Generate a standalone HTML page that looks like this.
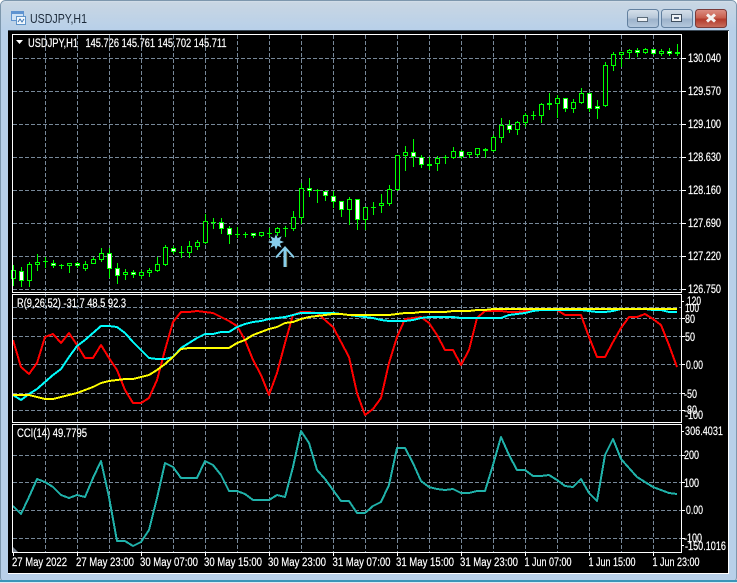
<!DOCTYPE html>
<html>
<head>
<meta charset="utf-8">
<style>
html,body{margin:0;padding:0;background:#fff}
#w{position:relative;width:737px;height:583px;overflow:hidden}
svg{display:block}
text{font-family:"Liberation Sans",sans-serif;font-size:11.5px;fill:#fff;stroke:#fff;stroke-width:.2px}
</style>
</head>
<body>
<div id="w">
<svg width="737" height="583" viewBox="0 0 737 583" xmlns="http://www.w3.org/2000/svg">
<defs>
<linearGradient id="tb" x1="0" y1="0" x2="0" y2="1"><stop offset="0" stop-color="#d3dee8"/><stop offset="0.06" stop-color="#c8d6e3"/><stop offset="1" stop-color="#b8d0e9"/></linearGradient>
<linearGradient id="btn" x1="0" y1="0" x2="0" y2="1"><stop offset="0" stop-color="#d6e0ea"/><stop offset="0.45" stop-color="#b9c9da"/><stop offset="0.55" stop-color="#9db3cb"/><stop offset="1" stop-color="#b5c9de"/></linearGradient>
<linearGradient id="cls" x1="0" y1="0" x2="0" y2="1"><stop offset="0" stop-color="#dc8f84"/><stop offset="0.45" stop-color="#c9604f"/><stop offset="0.55" stop-color="#b23a2b"/><stop offset="1" stop-color="#c9705f"/></linearGradient>
</defs>

<!-- window frame -->
<rect x="0" y="0" width="737" height="583" fill="#fff"/>
<rect x="0.5" y="0.5" width="736" height="582" rx="5" fill="#b8d0e9" stroke="#7d97ad"/>
<path d="M1 30V6Q1 1 6 1H731Q736 1 736 6V30Z" fill="url(#tb)"/>
<rect x="0" y="580" width="737" height="2" fill="#3a95b8"/>
<rect x="0" y="582" width="737" height="1" fill="#dfeaf2"/>

<!-- title icon -->
<g shape-rendering="crispEdges">
<rect x="11.5" y="11.5" width="12" height="9" fill="#cfe2f5" stroke="#5f93d0"/>
<rect x="11" y="12" width="13" height="2" fill="#5f93d0"/>
<rect x="16.5" y="16.5" width="9" height="8" fill="#f2f7fc" stroke="#5f93c8"/>
</g>
<path d="M18 22l2-3 2 3 2-3" fill="none" stroke="#3f78b5"/>
<text x="30" y="23" textLength="57" lengthAdjust="spacingAndGlyphs" style="font-size:13px;fill:#1c2a3a;stroke:none">USDJPY,H1</text>

<!-- window buttons -->
<rect x="627.5" y="9.5" width="31" height="18" rx="3" fill="url(#btn)" stroke="#62809f"/>
<rect x="637.5" y="17.5" width="10" height="4" fill="#eef2f6" stroke="#3f4f60" stroke-width="0.8"/>
<rect x="661.5" y="9.5" width="31" height="18" rx="3" fill="url(#btn)" stroke="#62809f"/>
<rect x="671.5" y="14.5" width="10" height="7" fill="#eef2f6" stroke="#3f4f60"/>
<rect x="674" y="17" width="5" height="2" fill="#54647a"/>
<rect x="695.5" y="9.5" width="31" height="18" rx="3" fill="url(#cls)" stroke="#7a3a38"/>
<path d="M707 14.5L715 21.5M715 14.5L707 21.5" stroke="#f4f2f0" stroke-width="3"/>

<!-- client area -->
<rect x="8" y="30" width="721" height="544" fill="#3b4a58"/>
<rect x="8" y="31" width="720" height="543" fill="#000"/>
<rect x="8" y="573" width="721" height="1" fill="#fff"/>
<rect x="728" y="31" width="1" height="543" fill="#fff"/>

<!-- grid -->
<g stroke="#778899" stroke-width="1" stroke-dasharray="4 2" shape-rendering="crispEdges" fill="none">
<path d="M45.5 35V552M77.5 35V552M109.5 35V552M141.5 35V552M173.5 35V552M205.5 35V552M237.5 35V552M269.5 35V552M301.5 35V552M333.5 35V552M365.5 35V552M397.5 35V552M429.5 35V552M461.5 35V552M493.5 35V552M525.5 35V552M557.5 35V552M589.5 35V552M621.5 35V552M653.5 35V552"/>
<path d="M13 58.5H681M13 91.5H681M13 124.5H681M13 157.5H681M13 190.5H681M13 223.5H681M13 256.5H681M13 289.5H681"/>
<path d="M13 307.5H681M13 318.5H681M13 336.5H681M13 364.5H681M13 393.5H681M13 410.5H681"/>
<path d="M13 455.5H681M13 482.5H681M13 510.5H681M13 538.5H681"/>
</g>

<!-- candles -->
<g shape-rendering="crispEdges" fill="none" stroke="#00ff00" stroke-width="1">
<path d="M13.5 265V286M21.5 267V287M29.5 262V287M37.5 254V271M45.5 257V268M53.5 260V268M61.5 264V269M69.5 263V273M77.5 262V268M85.5 261V271M93.5 257V264M101.5 248V262M109.5 248V278M117.5 263V284M125.5 269V280M133.5 270V278M141.5 270V279M149.5 268V277M157.5 257V272M165.5 245V266M173.5 246V254M181.5 246V258M189.5 241V258M197.5 240V250M205.5 214V244M213.5 218V229M221.5 218V234M229.5 226V244M237.5 227V238M245.5 232V238M253.5 233V238M261.5 232V237M269.5 228V238M277.5 227V236M285.5 226V237M293.5 211V231M301.5 183V224M309.5 178V197M317.5 189V203M325.5 191V201M333.5 191V208M341.5 201V217M349.5 197V225M357.5 199V230M365.5 207V230M373.5 202V215M381.5 194V213M389.5 185V206M397.5 155V191M405.5 146V171M413.5 139V167M421.5 155V168M429.5 157V170M437.5 156V171M445.5 155V164M453.5 147V159M461.5 150V159M469.5 152V158M477.5 148V157M485.5 148V158M493.5 135V152M501.5 118V143M509.5 120V133M517.5 121V135M525.5 113V127M533.5 111V120M541.5 103V123M549.5 93V110M557.5 95V118M565.5 98V112M573.5 99V113M581.5 88V104M589.5 93V112M597.5 100V119M605.5 62V107M613.5 52V71M621.5 52V67M629.5 49V59M637.5 48V57M645.5 48V54M653.5 49V55M661.5 49V56M669.5 48V56M677.5 44V56"/>
<path d="M43 261.5h5M59 265.5h5M179 252.5h5M211 222.5h5M235 234.5h5M243 234.5h5M267 233.5h5M283 228.5h5M315 190.5h5M371 207.5h5M427 164.5h5M427 165.5h5M443 157.5h5M483 149.5h5M483 150.5h5M531 115.5h5M547 103.5h5M547 104.5h5M675 53.5h5M675 52.5h5"/>
<path fill="#000" d="M11.5 270.5h4V278.5h-4zM27.5 264.5h4V280.5h-4zM35.5 262.5h4V264.5h-4zM67.5 263.5h4V265.5h-4zM83.5 264.5h4V268.5h-4zM91.5 259.5h4V263.5h-4zM99.5 253.5h4V259.5h-4zM123.5 272.5h4V274.5h-4zM139.5 272.5h4V275.5h-4zM147.5 270.5h4V272.5h-4zM155.5 264.5h4V270.5h-4zM163.5 247.5h4V264.5h-4zM187.5 246.5h4V252.5h-4zM195.5 242.5h4V246.5h-4zM203.5 221.5h4V242.5h-4zM259.5 232.5h4V235.5h-4zM275.5 228.5h4V232.5h-4zM291.5 217.5h4V228.5h-4zM299.5 188.5h4V217.5h-4zM347.5 199.5h4V209.5h-4zM363.5 207.5h4V219.5h-4zM379.5 203.5h4V205.5h-4zM387.5 189.5h4V203.5h-4zM395.5 155.5h4V189.5h-4zM403.5 152.5h4V155.5h-4zM435.5 158.5h4V163.5h-4zM451.5 151.5h4V157.5h-4zM467.5 152.5h4V154.5h-4zM475.5 148.5h4V154.5h-4zM491.5 137.5h4V150.5h-4zM499.5 125.5h4V137.5h-4zM515.5 122.5h4V129.5h-4zM523.5 115.5h4V122.5h-4zM539.5 104.5h4V115.5h-4zM555.5 98.5h4V103.5h-4zM571.5 102.5h4V108.5h-4zM579.5 93.5h4V102.5h-4zM603.5 65.5h4V105.5h-4zM611.5 54.5h4V65.5h-4zM619.5 52.5h4V54.5h-4zM627.5 50.5h4V52.5h-4zM643.5 49.5h4V52.5h-4zM659.5 51.5h4V53.5h-4z"/>
<path fill="#fff" d="M19.5 271.5h4V280.5h-4zM51.5 263.5h4V265.5h-4zM75.5 263.5h4V265.5h-4zM107.5 253.5h4V268.5h-4zM115.5 268.5h4V275.5h-4zM131.5 272.5h4V274.5h-4zM171.5 248.5h4V251.5h-4zM219.5 222.5h4V228.5h-4zM227.5 228.5h4V234.5h-4zM251.5 233.5h4V235.5h-4zM307.5 188.5h4V190.5h-4zM323.5 191.5h4V195.5h-4zM331.5 196.5h4V201.5h-4zM339.5 201.5h4V209.5h-4zM355.5 199.5h4V219.5h-4zM411.5 152.5h4V156.5h-4zM419.5 157.5h4V164.5h-4zM459.5 151.5h4V156.5h-4zM507.5 125.5h4V129.5h-4zM563.5 98.5h4V108.5h-4zM587.5 93.5h4V108.5h-4zM595.5 106.5h4V108.5h-4zM635.5 50.5h4V52.5h-4zM651.5 49.5h4V53.5h-4zM667.5 51.5h4V53.5h-4z"/>
</g>

<!-- star and arrow -->
<polygon fill="#87ceeb" points="276,234 277.6,238.2 281.7,236.3 279.8,240.4 284,242 279.8,243.6 281.7,247.7 277.6,245.8 276,250 274.4,245.8 270.3,247.7 272.2,243.6 268,242 272.2,240.4 270.3,236.3 274.4,238.2"/>
<path d="M286.5 250V267" stroke="#6b5a20" stroke-width="1.5" fill="none"/>
<path d="M294.5 257.5L285.5 247.5" stroke="#6b5a20" stroke-width="1" fill="none"/>
<path d="M285 248V267" stroke="#87ceeb" stroke-width="3" fill="none"/>
<path d="M276 257.5L285 247.5L294 257.5" stroke="#87ceeb" stroke-width="2" fill="none"/>

<!-- oscillator -->
<g fill="none" stroke-width="2" shape-rendering="crispEdges" stroke-linejoin="round">
<polyline stroke="#ff0000" points="13,340 21,367 29,374 37,363 45,337 53,334 61,343 69,333 77,345 85,358 93,358 101,345 109,358 117,370 125,390 133,403 141,403 149,398 157,380 165,350 173,322 181,312 189,312 197,311 205,312 213,313 221,317 229,321 237,326 245,340 253,360 261,375 269,395 277,373 285,343 293,315 301,312 309,312 317,313 325,320 333,327 341,342 349,357 357,393 365,415 373,409 381,398 389,363 397,337 405,319 413,318 421,317 429,323 437,335 445,350 453,350 461,365 469,350 477,318 485,311 493,311 501,311 509,312 517,312 525,311 533,310 541,309 549,309 557,310 565,315 573,315 581,315 589,337 597,357 605,357 613,342 621,328 629,317 637,317 645,314 653,319 661,325 669,345 677,367"/>
<polyline stroke="#00ffff" points="13,395 21,400 29,394 37,389 45,382 53,375 61,369 69,357 77,346 85,340 93,333 101,326 109,326 117,327 125,333 133,342 141,350 149,358 157,359 165,359 173,357 181,348 189,343 197,338 205,334 213,334 221,332 229,332 237,327 245,324 253,322 261,321 269,319 277,318 285,317 293,315 301,313 309,313 317,313 325,313 333,313 341,314 349,315 357,316 365,317 373,318 381,320 389,321 397,321 405,321 413,320 421,318 429,317 437,317 445,317 453,317 461,318 469,318 477,318 485,318 493,318 501,318 509,315 517,314 525,313 533,311 541,310 549,310 557,310 565,310 573,310 581,310 589,311 597,312 605,312 613,311 621,309 629,309 637,309 645,309 653,310 661,310 669,312 677,312"/>
<polyline stroke="#ffff00" points="13,395 21,395 29,395 37,397 45,399 53,399 61,397 69,395 77,393 85,390 93,387 101,383 109,381 117,380 125,379 133,379 141,377 149,375 157,370 165,364 173,357 181,349 189,348 197,348 205,348 213,348 221,348 229,348 237,343 245,340 253,335 261,332 269,329 277,327 285,323 293,322 301,319 309,317 317,316 325,315 333,314 341,314 349,315 357,315 365,315 373,315 381,315 389,315 397,314 405,313 413,313 421,312 429,312 437,312 445,312 453,311 461,311 469,311 477,310 485,310 493,309 501,309 509,309 517,309 525,309 533,309 541,309 549,309 557,309 565,309 573,309 581,309 589,309 597,309 605,309 613,309 621,309 629,309 637,309 645,309 653,309 661,309 669,309 677,309"/>
<polyline stroke="#20b2aa" points="13,506 21,514 29,497 37,479 45,482 53,487 61,495 69,498 77,495 85,497 93,478 101,461 109,497 117,541 125,541 133,546 141,542 149,530 157,498 165,463 173,467 181,478 189,478 197,478 205,461 213,465 221,475 229,491 237,491 245,494 253,500 261,500 269,500 277,495 285,497 293,467 301,431 309,443 317,470 325,479 333,490 341,501 349,501 357,513 365,513 373,506 381,502 389,485 397,448 405,448 413,463 421,481 429,487 437,489 445,490 453,489 461,493 469,493 477,491 485,491 493,465 501,437 509,455 517,470 525,470 533,476 541,476 549,475 557,480 565,486 573,487 581,479 589,493 597,501 605,455 613,439 621,459 629,468 637,477 645,482 653,487 661,490 669,493 677,494"/>
</g>

<!-- pane borders -->
<g fill="none" stroke="#fff" stroke-width="1" shape-rendering="crispEdges">
<rect x="12.5" y="34.5" width="669" height="258"/>
<rect x="12.5" y="294.5" width="669" height="128"/>
<rect x="12.5" y="424.5" width="669" height="128"/>
<path d="M682 58.5h4M682 91.5h4M682 124.5h4M682 157.5h4M682 190.5h4M682 223.5h4M682 256.5h4M682 289.5h4"/>
<path d="M682 301.5h2M682 318.5h3M682 336.5h3M682 364.5h3M682 393.5h3M682 410.5h3"/>
<path d="M682 431.5h2M682 455.5h3M682 482.5h3M682 510.5h3M682 538.5h3M682 545.5h2"/>
<path d="M13.5 552V556M77.5 552V556M141.5 552V556M205.5 552V556M269.5 552V556M333.5 552V556M397.5 552V556M461.5 552V556M525.5 552V556M589.5 552V556M653.5 552V556"/>
</g>
<polygon points="13,547 13,552 18,552" fill="#77808c"/>

<!-- legends -->
<polygon points="16,40 23,40 19.5,44" fill="#fff"/>
<text x="28" y="47" textLength="50" lengthAdjust="spacingAndGlyphs">USDJPY,H1</text>
<text x="85.5" y="47" textLength="141" lengthAdjust="spacingAndGlyphs">145.726 145.761 145.702 145.711</text>
<text x="17" y="307" textLength="109" lengthAdjust="spacingAndGlyphs">R(9,26,52) -31.7 48.5 92.3</text>
<text x="17" y="437" textLength="70" lengthAdjust="spacingAndGlyphs">CCI(14) 49.7795</text>

<!-- price axis -->
<text x="688" y="62" textLength="33" lengthAdjust="spacingAndGlyphs">130.040</text>
<text x="688" y="95" textLength="33" lengthAdjust="spacingAndGlyphs">129.570</text>
<text x="688" y="128" textLength="33" lengthAdjust="spacingAndGlyphs">129.100</text>
<text x="688" y="161" textLength="33" lengthAdjust="spacingAndGlyphs">128.630</text>
<text x="688" y="194" textLength="33" lengthAdjust="spacingAndGlyphs">128.160</text>
<text x="688" y="227" textLength="33" lengthAdjust="spacingAndGlyphs">127.690</text>
<text x="688" y="260" textLength="33" lengthAdjust="spacingAndGlyphs">127.220</text>
<text x="688" y="293" textLength="33" lengthAdjust="spacingAndGlyphs">126.750</text>

<!-- oscillator axis -->
<text x="687" y="305" textLength="14" lengthAdjust="spacingAndGlyphs">120</text>
<text x="685" y="312" textLength="14" lengthAdjust="spacingAndGlyphs">100</text>
<text x="685" y="323" textLength="10" lengthAdjust="spacingAndGlyphs">80</text>
<text x="685" y="341" textLength="10" lengthAdjust="spacingAndGlyphs">50</text>
<text x="686" y="369" textLength="17" lengthAdjust="spacingAndGlyphs">0.00</text>
<text x="684" y="398" textLength="13" lengthAdjust="spacingAndGlyphs">-50</text>
<text x="684" y="414" textLength="13" lengthAdjust="spacingAndGlyphs">-80</text>
<text x="685" y="419" textLength="18" lengthAdjust="spacingAndGlyphs">-100</text>

<!-- cci axis -->
<text x="685" y="435" textLength="38" lengthAdjust="spacingAndGlyphs">306.4031</text>
<text x="684" y="459" textLength="15" lengthAdjust="spacingAndGlyphs">200</text>
<text x="684" y="487" textLength="15" lengthAdjust="spacingAndGlyphs">100</text>
<text x="686" y="514" textLength="17" lengthAdjust="spacingAndGlyphs">0.00</text>
<text x="684" y="542" textLength="18" lengthAdjust="spacingAndGlyphs">-100</text>
<text x="685" y="550" textLength="41" lengthAdjust="spacingAndGlyphs">-150.1016</text>

<!-- time axis -->
<text x="12" y="566" textLength="55" lengthAdjust="spacingAndGlyphs">27 May 2022</text>
<text x="76" y="566" textLength="58" lengthAdjust="spacingAndGlyphs">27 May 23:00</text>
<text x="140" y="566" textLength="58" lengthAdjust="spacingAndGlyphs">30 May 07:00</text>
<text x="204" y="566" textLength="58" lengthAdjust="spacingAndGlyphs">30 May 15:00</text>
<text x="268" y="566" textLength="58" lengthAdjust="spacingAndGlyphs">30 May 23:00</text>
<text x="332.5" y="566" textLength="58" lengthAdjust="spacingAndGlyphs">31 May 07:00</text>
<text x="396" y="566" textLength="58" lengthAdjust="spacingAndGlyphs">31 May 15:00</text>
<text x="460" y="566" textLength="58" lengthAdjust="spacingAndGlyphs">31 May 23:00</text>
<text x="524.5" y="566" textLength="47" lengthAdjust="spacingAndGlyphs">1 Jun 07:00</text>
<text x="588.5" y="566" textLength="47" lengthAdjust="spacingAndGlyphs">1 Jun 15:00</text>
<text x="652.5" y="566" textLength="47" lengthAdjust="spacingAndGlyphs">1 Jun 23:00</text>
</svg>
</div>
</body>
</html>
